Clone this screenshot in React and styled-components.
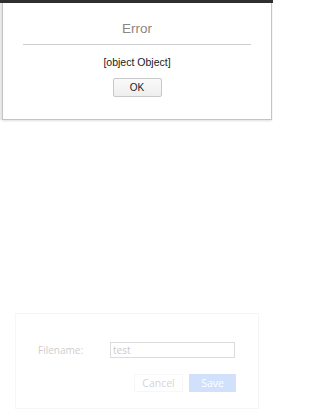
import React from 'react'
import styled, { createGlobalStyle } from 'styled-components'

const GlobalStyle = createGlobalStyle`
    html, body {
        margin: 0;
        padding: 0;
        background: #ffffff;
        font-family: "Liberation Sans", Arial, sans-serif;
    }
`

const Page = styled.div`
    width: 273px;
    height: 412px;
    display: flex;
    flex-direction: column;
    overflow: hidden;
`

const TopBar = styled.div`
    height: 3px;
    background: #2f2f2f;
`

const AlertBox = styled.div`
    margin: 0 1px 0 2px;
    height: 117px;
    border: 1px solid #c4c4c4;
    border-top: none;
    box-shadow: 0 1px 2px rgba(0, 0, 0, 0.12), -2px 0 0 #ececec;
    display: flex;
    flex-direction: column;
    align-items: center;
    box-sizing: border-box;
`

const Title = styled.h2`
    margin: 18px 0 0;
    font-size: 13.5px;
    font-weight: normal;
    color: #8b8680;
    line-height: 16px;
`

const Rule = styled.hr`
    width: 228px;
    margin: 7px 0 0;
    border: none;
    border-top: 1px solid #cfcfcf;
`

const Message = styled.p`
    margin: 10px 0 0;
    font-size: 10.5px;
    color: #1a1a1a;
    line-height: 14px;
`

const OkButton = styled.button`
    margin-top: 9px;
    width: 49px;
    height: 19px;
    padding: 0;
    border: 1px solid #c8c8c8;
    border-radius: 2px;
    background: linear-gradient(#fafafa, #eeeeee);
    font-family: "Liberation Sans", Arial, sans-serif;
    font-size: 10px;
    color: #222;
`

const SaveDialog = styled.div`
    margin: 193px 0 0 15px;
    width: 244px;
    height: 96px;
    box-sizing: border-box;
    border: 1px solid #dcdcdc;
    padding: 28px 22px 0 22px;
    display: flex;
    flex-direction: column;
    gap: 16px;
    opacity: 0.25;
`

const Row = styled.div`
    display: flex;
    align-items: center;
`

const Label = styled.label`
    width: 72px;
    font-family: "Open Sans", "Liberation Sans", sans-serif;
    font-size: 10px;
    color: #333;
`

const Input = styled.input`
    width: 125px;
    height: 16px;
    box-sizing: border-box;
    border: 1px solid #777;
    padding: 0 2px;
    font-family: "Open Sans", "Liberation Sans", sans-serif;
    font-size: 10px;
    color: #222;
`

const Actions = styled.div`
    display: flex;
    justify-content: flex-end;
    gap: 6px;
`

const Button = styled.button`
    width: ${(p) => (p.$primary ? '47px' : '49px')};
    height: 18px;
    padding: 0;
    border: 1px solid ${(p) => (p.$primary ? '#4a8af4' : '#e2e2e2')};
    background: ${(p) => (p.$primary ? '#4a8af4' : '#ffffff')};
    color: ${(p) => (p.$primary ? '#ffffff' : '#555')};
    font-family: "Open Sans", "Liberation Sans", sans-serif;
    font-size: 10.5px;
`

const App = () => {
    return (
        <Page>
            <GlobalStyle />
            <TopBar />
            <AlertBox>
                <Title>Error</Title>
                <Rule />
                <Message>[object Object]</Message>
                <OkButton>OK</OkButton>
            </AlertBox>
            <SaveDialog>
                <Row>
                    <Label>Filename:</Label>
                    <Input defaultValue="test" />
                </Row>
                <Actions>
                    <Button>Cancel</Button>
                    <Button $primary>Save</Button>
                </Actions>
            </SaveDialog>
        </Page>
    )
}

export default App
